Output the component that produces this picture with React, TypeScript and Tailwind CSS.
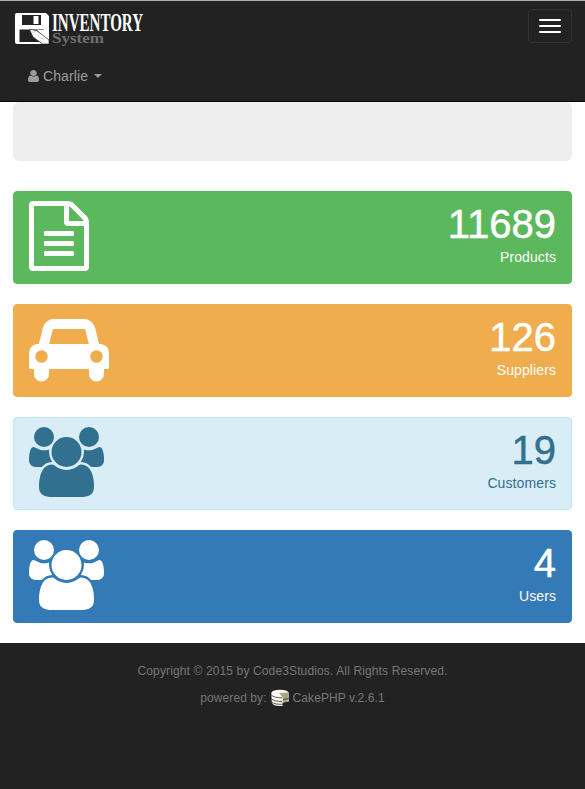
import type { ReactNode } from "react";

const USER =
  "M1536 1399q0 109-62.5 187t-150.5 78h-854q-88 0-150.5-78t-62.5-187q0-85 8.5-160.5t31.5-152 58.5-131 94-89 134.5-34.5q131 128 313 128t313-128q76 0 134.5 34.5t94 89 58.5 131 31.5 152 8.5 160.5zm-256-887q0 159-112.5 271.5t-271.5 112.5-271.5-112.5-112.5-271.5 112.5-271.5 271.5-112.5 271.5 112.5 112.5 271.5z";
const FILE =
  "M1596 380q28 28 48 76t20 88v1152q0 40-28 68t-68 28h-1344q-40 0-68-28t-28-68v-1600q0-40 28-68t68-28h896q40 0 88 20t76 48zm-444-244v376h376q-10-29-22-41l-313-313q-12-12-41-22zm384 1528v-1024h-416q-40 0-68-28t-28-68v-416h-768v1536h1280zm-1024-864q0-14 9-23t23-9h704q14 0 23 9t9 23v64q0 14-9 23t-23 9h-704q-14 0-23-9t-9-23v-64zm736 224q14 0 23 9t9 23v64q0 14-9 23t-23 9h-704q-14 0-23-9t-9-23v-64q0-14 9-23t23-9h704zm0 256q14 0 23 9t9 23v64q0 14-9 23t-23 9h-704q-14 0-23-9t-9-23v-64q0-14 9-23t23-9h704z";
const CAR =
  "M480 1088q0-66-47-113t-113-47-113 47-47 113 47 113 113 47 113-47 47-113zm36-320h1016l-89-357q-2-8-14-17.5t-21-9.5h-768q-9 0-21 9.5t-14 17.5zm1372 320q0-66-47-113t-113-47-113 47-47 113 47 113 113 47 113-47 47-113zm160-96v384q0 14-9 23t-23 9h-96v128q0 80-56 136t-136 56-136-56-56-136v-128h-1024v128q0 80-56 136t-136 56-136-56-56-136v-128h-96q-14 0-23-9t-9-23v-384q0-93 65.5-158.5t158.5-65.5h28l105-419q23-94 104-157.5t179-63.5h768q98 0 179 63.5t104 157.5l105 419h28q93 0 158.5 65.5t65.5 158.5z";
const GROUP =
  "M593 896q-162 5-265 128h-134q-82 0-138-40.5t-56-118.5q0-353 124-353 6 0 43.5 21t97.5 42.5 119 21.5q67 0 133-23-5 37-5 66 0 139 81 256zm1071 637q0 120-73 189.5t-194 69.5h-874q-121 0-194-69.5t-73-189.5q0-53 3.5-103.5t14-109 26.5-108.5 43-97.5 62-81 85.5-53.5 111.5-20q10 0 43 21.5t73 48 107 48 135 21.5 135-21.5 107-48 73-48 43-21.5q61 0 111.5 20t85.5 53.5 62 81 43 97.5 26.5 108.5 14 109 3.5 103.5zm-1024-1277q0 106-75 181t-181 75-181-75-75-181 75-181 181-75 181 75 75 181zm704 384q0 159-112.5 271.5t-271.5 112.5-271.5-112.5-112.5-271.5 112.5-271.5 271.5-112.5 271.5 112.5 112.5 271.5zm576 225q0 78-56 118.5t-138 40.5h-134q-103-123-265-128 81-117 81-256 0-29-5-66 66 23 133 23 59 0 119-21.5t97.5-42.5 43.5-21q124 0 124 353zm-128-609q0 106-75 181t-181 75-181-75-75-181 75-181 181-75 181 75 75 181z";

function Logo() {
  return (
    <svg width="132" height="38" viewBox="0 0 132 38" className="overflow-visible">
      <path d="M2 1H31L34 4V30Q34 32 32 32H2Q0 32 0 30V3Q0 1 2 1Z" fill="#fff" />
      <path d="M7 3H26V13H7Z" fill="#222" />
      <path d="M18.5 4H23.5V12H18.5Z" fill="#fff" />
      <path d="M4.5 17.5H29V30H4.5Z" fill="#222" />
      <path d="M22 18H30V27Z" fill="#fff" />
      <path d="M14.3 17.2L21.5 18.5L34 28V32H27.5L18 25Z" fill="#fff" stroke="#222" strokeWidth="0.7" />
      <path d="M17.5 20.5L20.5 19.5M23 23.5L29 28.5" stroke="#999" strokeWidth="0.5" />
      <text x="37" y="18.5" fontFamily="Liberation Serif, serif" fontWeight="700" fontSize="26" fill="#fff" textLength="91" lengthAdjust="spacingAndGlyphs">INVENTORY</text>
      <text x="37" y="31" fontFamily="Liberation Serif, serif" fontWeight="700" fontSize="15" fill="#6f6f6f" textLength="52" lengthAdjust="spacingAndGlyphs">System</text>
    </svg>
  );
}

function Cake() {
  return (
    <svg width="18" height="18" viewBox="0 0 18 18">
      <path d="M.3 4Q.5 1 9 .8Q17.5 1 17.7 4V12.5L11.5 13.5V17Q2 17.5 .8 13.5Z" fill="#fafaf2" />
      <path d="M8 4L17.7 3.5V12.5L12 13.5L11.5 8Z" fill="#a5aa80" />
      <path d="M.3 6Q3 8.8 11 8.8M.5 9.8Q3 12.5 11 12.5M.8 13.2Q4 15.5 11.5 15.3M12 10.5L17.7 9.5" fill="none" stroke="#34352a" strokeWidth="0.8" />
    </svg>
  );
}

function Card({ tone, value, label, children }: { tone: string; value: string; label: string; children: ReactNode }) {
  return (
    <section className={`flex h-[93px] justify-between rounded border px-[15px] py-[9px] ${tone}`}>
      {children}
      <div className="pt-px text-right">
        <div className="text-[40px] leading-[44px] [-webkit-text-stroke:0.5px_currentColor]">{value}</div>
        <div className="mt-px text-sm leading-5 tracking-[0.1px]">{label}</div>
      </div>
    </section>
  );
}

export default function App() {
  return (
    <div className="flex h-[789px] w-[585px] flex-col bg-white font-['Liberation_Sans',Arial,sans-serif]">
      <header className="h-[102px] shrink-0 border-t border-b border-t-[#a9b3ae] border-b-[#080808] bg-[#222]">
        <div className="flex h-[50px] items-start justify-between pt-[8px] pr-[13px] pl-[15px]">
          <div className="pt-[3px]">
            <Logo />
          </div>
          <button className="flex h-[34px] w-11 flex-col items-center justify-center gap-1 rounded border border-[#333]" aria-label="Menu">
            <span className="h-0.5 w-[22px] rounded-[1px] bg-white" />
            <span className="h-0.5 w-[22px] rounded-[1px] bg-white" />
            <span className="h-0.5 w-[22px] rounded-[1px] bg-white" />
          </button>
        </div>
        <div className="mt-[15px] flex h-5 items-center pl-7 text-sm leading-5 tracking-[0.1px] text-[#9d9d9d]">
          <svg className="mr-1" width="11" height="12" viewBox="256 128 1280 1536" preserveAspectRatio="none" fill="currentColor">
            <path d={USER} />
          </svg>
          Charlie
          <span className="ml-1.5 border-x-4 border-t-4 border-x-transparent border-t-[#9d9d9d]" />
        </div>
      </header>
      <main className="px-[13px]">
        <div className="h-[59px] rounded-md bg-[#eee]" />
        <div className="mt-[30px] flex flex-col gap-5">
          <Card tone="border-[#5cb85c] bg-[#5cb85c] text-white" value="11689" label="Products">
            <svg width="62" height="70" viewBox="128 0 1587 1792" fill="currentColor">
              <path d={FILE} />
            </svg>
          </Card>
          <Card tone="border-[#f0ad4e] bg-[#f0ad4e] text-white" value="126" label="Suppliers">
            <svg width="81" height="70" viewBox="0 0 2074 1792" fill="currentColor">
              <path d={CAR} />
            </svg>
          </Card>
          <Card tone="border-[#bce8f1] bg-[#d9edf7] text-[#31708f]" value="19" label="Customers">
            <svg width="75" height="70" viewBox="0 0 1920 1792" fill="currentColor">
              <path d={GROUP} />
            </svg>
          </Card>
          <Card tone="border-[#337ab7] bg-[#337ab7] text-white" value="4" label="Users">
            <svg width="75" height="70" viewBox="0 0 1920 1792" fill="currentColor">
              <path d={GROUP} />
            </svg>
          </Card>
        </div>
      </main>
      <footer className="mt-5 flex flex-1 flex-col items-center bg-[#222] pt-5 text-xs leading-[17px] text-[#777]">
        <p className="tracking-[0.13px]">Copyright © 2015 by Code3Studios. All Rights Reserved.</p>
        <p className="mt-[9px] flex items-center gap-1 tracking-[0.08px]">
          powered by: <Cake /> CakePHP v.2.6.1
        </p>
      </footer>
    </div>
  );
}
